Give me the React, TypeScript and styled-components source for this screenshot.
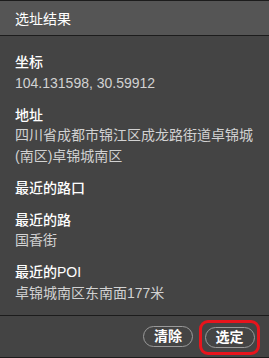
import React from "react";
import styled, { createGlobalStyle } from "styled-components";

const GlobalStyle = createGlobalStyle`
  html, body {
    margin: 0;
    padding: 0;
    background: #444444;
  }
  body {
    font-family: "Liberation Sans", "Noto Sans CJK SC", sans-serif;
  }
`;

type Entry = {
  label: string;
  value?: string;
};

const entries: Entry[] = [
  { label: "坐标", value: "104.131598, 30.59912" },
  { label: "地址", value: "四川省成都市锦江区成龙路街道卓锦城(南区)卓锦城南区" },
  { label: "最近的路口" },
  { label: "最近的路", value: "国香街" },
  { label: "最近的POI", value: "卓锦城南区东南面177米" },
];

const Panel = styled.div`
  width: 269px;
  height: 358px;
  box-sizing: border-box;
  background: #444444;
  border-top: 1px solid #1c1c1c;
  border-bottom: 1px solid #1c1c1c;
  display: flex;
  flex-direction: column;
`;

const Header = styled.header`
  height: 34px;
  flex-shrink: 0;
  background: #555555;
  border-bottom: 1px solid #1c1c1c;
  display: flex;
  align-items: center;
  padding: 0 15px;
  color: #ffffff;
  font-size: 14px;
`;

const Body = styled.div`
  flex: 1;
  padding: 16px 15px 0;
  display: flex;
  flex-direction: column;
  gap: 11.5px;
`;

const Section = styled.div`
  display: flex;
  flex-direction: column;
  line-height: 20.5px;
  font-size: 14px;
`;

const Label = styled.div`
  color: #ffffff;
  font-weight: 500;
`;

const Value = styled.div`
  color: #d2d2d2;
`;

const Footer = styled.footer`
  height: 41px;
  flex-shrink: 0;
  border-top: 1px solid #1c1c1c;
  display: flex;
  align-items: center;
  justify-content: flex-end;
  padding-right: 9px;
  gap: 6px;
`;

const Pill = styled.button`
  height: 21px;
  width: 50px;
  box-sizing: border-box;
  border: 1px solid #9a9a9a;
  border-radius: 11px;
  background: transparent;
  color: #ffffff;
  font-family: inherit;
  font-size: 14px;
  font-weight: 700;
  line-height: 19px;
  padding: 0;
  cursor: pointer;
`;

const Highlight = styled.span`
  display: flex;
  align-items: center;
  justify-content: center;
  width: 61px;
  height: 35px;
  box-sizing: border-box;
  border: 3px solid #e8141c;
  border-radius: 9px;
  margin-top: 1px;
`;

export default function App() {
  return (
    <>
      <GlobalStyle />
      <Panel>
        <Header>选址结果</Header>
        <Body>
          {entries.map((entry) => (
            <Section key={entry.label}>
              <Label>{entry.label}</Label>
              {entry.value && <Value>{entry.value}</Value>}
            </Section>
          ))}
        </Body>
        <Footer>
          <Pill>清除</Pill>
          <Highlight>
            <Pill>选定</Pill>
          </Highlight>
        </Footer>
      </Panel>
    </>
  );
}
